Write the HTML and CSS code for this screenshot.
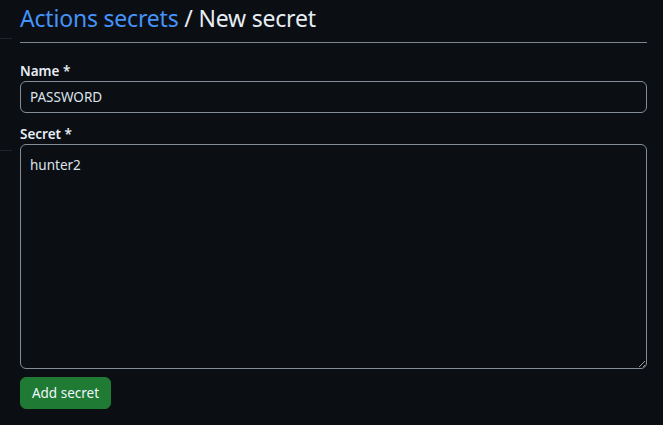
FILE: index.html
```html
<!DOCTYPE html>
<html lang="en">
<head>
<meta charset="utf-8">
<title>New secret</title>
<link rel="stylesheet" href="styles.css">
</head>
<body>
<div class="page">
  <aside class="gutter">
    <div class="gutter-line first"></div>
    <div class="gutter-line second"></div>
  </aside>
  <main class="content">
    <h1 class="title"><a class="crumb" href="#">Actions secrets</a> / New secret</h1>
    <form class="form">
      <label class="label" for="name">Name *</label>
      <input class="input" id="name" type="text" value="PASSWORD">
      <label class="label" for="secret">Secret *</label>
      <textarea class="textarea" id="secret">hunter2</textarea>
      <button class="btn" type="button">Add secret</button>
    </form>
  </main>
</div>
</body>
</html>
```
FILE: styles.css
```css
html, body {
  margin: 0;
  background: #0b0e13;
  color: #e6edf3;
  font-family: "Noto Sans", "Open Sans", sans-serif;
  font-size: 14px;
}
.page {
  display: flex;
  height: 425px;
  overflow: hidden;
}
.gutter {
  width: 12px;
  flex: none;
}
.gutter-line {
  height: 1px;
  background: #21262d;
}
.gutter-line.first { margin-top: 38px; }
.gutter-line.second { margin-top: 111px; }
.content {
  flex: 1;
  padding: 0 16px 0 8px;
}
.title {
  margin: 0;
  font-size: 23px;
  font-weight: 400;
  line-height: 36px;
  padding-bottom: 6px;
  border-bottom: 1px solid #7d8590;
  letter-spacing: -0.2px;
}
.crumb {
  color: #4493f8;
  text-decoration: none;
}
.form {
  display: flex;
  flex-direction: column;
  padding-top: 18px;
}
.label {
  font-weight: 600;
  font-size: 13.5px;
  line-height: 20px;
}
.input, .textarea {
  box-sizing: border-box;
  width: 100%;
  background: #0b0e13;
  color: #dde3ea;
  border: 1px solid #848d97;
  border-radius: 6px;
  font-family: inherit;
  font-size: 13.5px;
  padding: 0 9px;
  outline: none;
}
.input {
  height: 32px;
  margin-bottom: 11px;
}
.textarea {
  height: 225px;
  padding-top: 10px;
  line-height: 20px;
  resize: vertical;
  margin-bottom: 8px;
}
.btn {
  align-self: flex-start;
  height: 32px;
  width: 91px;
  padding: 0;
  background: #1f7a34;
  color: #f0f6fc;
  border: 1px solid #1f7a34;
  border-radius: 6px;
  font-family: inherit;
  font-size: 13.5px;
  font-weight: 400;
}
```
